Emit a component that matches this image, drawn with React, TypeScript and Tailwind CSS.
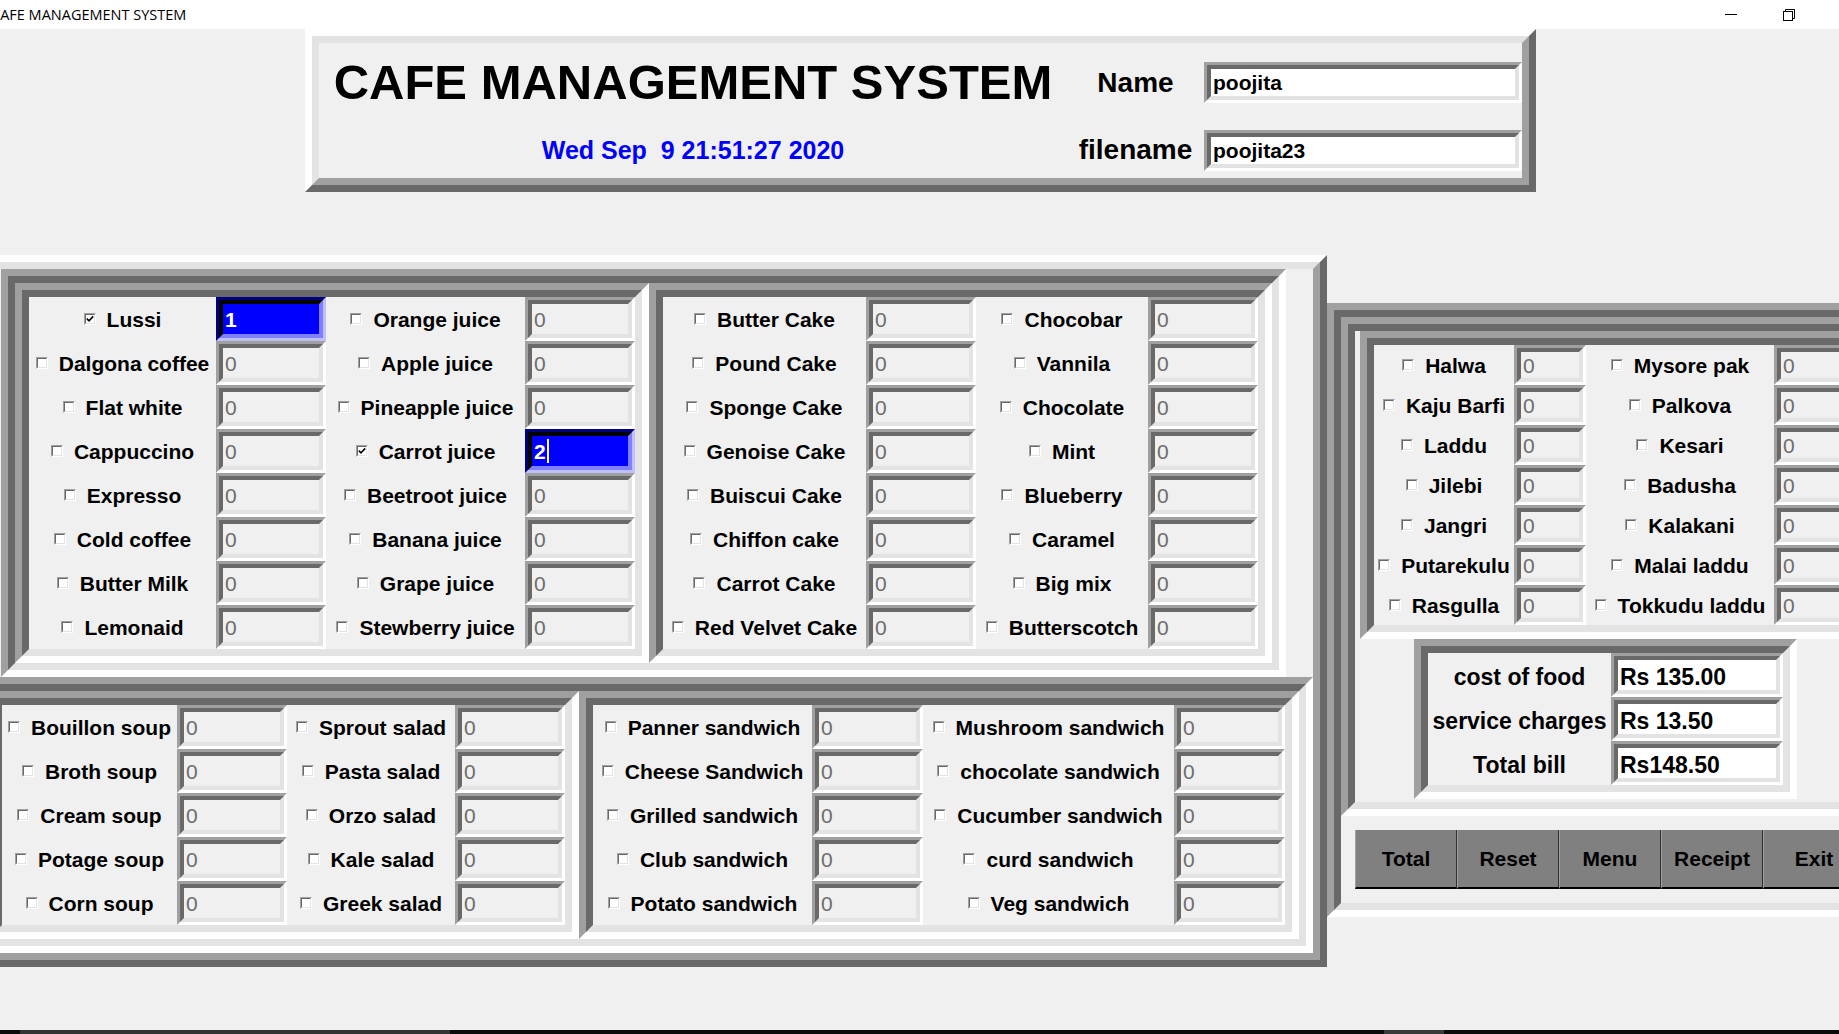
import React from 'react';

type Item = { name: string; value: string; on: boolean };

const it = (name: string, value = '0', on = false): Item => ({ name, value, on });

const drinks: [Item, Item][] = [
  [it('Lussi', '1', true), it('Orange juice')],
  [it('Dalgona coffee'), it('Apple juice')],
  [it('Flat white'), it('Pineapple juice')],
  [it('Cappuccino'), it('Carrot juice', '2', true)],
  [it('Expresso'), it('Beetroot juice')],
  [it('Cold coffee'), it('Banana juice')],
  [it('Butter Milk'), it('Grape juice')],
  [it('Lemonaid'), it('Stewberry juice')],
];

const cakes: [Item, Item][] = [
  [it('Butter Cake'), it('Chocobar')],
  [it('Pound Cake'), it('Vannila')],
  [it('Sponge Cake'), it('Chocolate')],
  [it('Genoise Cake'), it('Mint')],
  [it('Buiscui Cake'), it('Blueberry')],
  [it('Chiffon cake'), it('Caramel')],
  [it('Carrot Cake'), it('Big mix')],
  [it('Red Velvet Cake'), it('Butterscotch')],
];

const soups: [Item, Item][] = [
  [it('Bouillon soup'), it('Sprout salad')],
  [it('Broth soup'), it('Pasta salad')],
  [it('Cream soup'), it('Orzo salad')],
  [it('Potage soup'), it('Kale salad')],
  [it('Corn soup'), it('Greek salad')],
];

const sandwiches: [Item, Item][] = [
  [it('Panner sandwich'), it('Mushroom sandwich')],
  [it('Cheese Sandwich'), it('chocolate sandwich')],
  [it('Grilled sandwich'), it('Cucumber sandwich')],
  [it('Club sandwich'), it('curd sandwich')],
  [it('Potato sandwich'), it('Veg sandwich')],
];

const sweets: [Item, Item][] = [
  [it('Halwa'), it('Mysore pak')],
  [it('Kaju Barfi'), it('Palkova')],
  [it('Laddu'), it('Kesari')],
  [it('Jilebi'), it('Badusha')],
  [it('Jangri'), it('Kalakani')],
  [it('Putarekulu'), it('Malai laddu')],
  [it('Rasgulla'), it('Tokkudu laddu')],
];

const bill = [
  ['cost of food', 'Rs 135.00'],
  ['service charges', 'Rs 13.50'],
  ['Total bill', 'Rs148.50'],
];

// tk style 3d borders, two 7px bands each
function Sunken({ children, className = '' }: { children: React.ReactNode; className?: string }) {
  return (
    <div className={`shrink-0 border-[7px] border-t-[#a0a0a0] border-l-[#a0a0a0] border-r-white border-b-white ${className}`}>
      <div className="border-[7px] border-t-[#696969] border-l-[#696969] border-r-[#e3e3e3] border-b-[#e3e3e3]">
        {children}
      </div>
    </div>
  );
}

function Raised({ children, className = '' }: { children: React.ReactNode; className?: string }) {
  return (
    <div className={`shrink-0 border-[7px] border-t-white border-l-white border-r-[#696969] border-b-[#696969] ${className}`}>
      <div className="border-[7px] border-t-[#e3e3e3] border-l-[#e3e3e3] border-r-[#a0a0a0] border-b-[#a0a0a0]">
        {children}
      </div>
    </div>
  );
}

function Entry({ value, w, active = false, white = false, big = false }: { value: string; w: string; active?: boolean; white?: boolean; big?: boolean }) {
  const outer = active
    ? 'border-t-[#00007f] border-l-[#00007f] border-r-[#bfbfff] border-b-[#bfbfff]'
    : 'border-t-[#a0a0a0] border-l-[#a0a0a0] border-r-white border-b-white';
  const inner = active
    ? 'border-t-black border-l-black border-r-[#8080ff] border-b-[#8080ff]'
    : 'border-t-[#696969] border-l-[#696969] border-r-[#e3e3e3] border-b-[#e3e3e3]';
  const fill = active
    ? 'bg-[#0000ff] text-white font-bold'
    : white
      ? 'bg-white text-black font-bold'
      : 'bg-[#f0f0f0] text-[#6d6d6d]';
  return (
    <div className={`${w} h-full shrink-0 border-[3px] ${outer}`}>
      <div className={`h-full border-[4px] ${inner} ${fill} flex items-center pl-[2px] ${big ? 'text-[23px] pt-[4px]' : 'text-[21px]'} leading-none`}>
        {value}
        {value === '2' && <span className="ml-[1px] w-[2px] h-[24px] bg-white" />}
      </div>
    </div>
  );
}

function Check({ on }: { on: boolean }) {
  return (
    <span className="block w-[12px] h-[12px] shrink-0 border border-t-[#a0a0a0] border-l-[#a0a0a0] border-r-white border-b-white">
      <span className="flex items-center justify-center w-full h-full border border-t-[#696969] border-l-[#696969] border-r-[#e3e3e3] border-b-[#e3e3e3] bg-white">
        {on && (
          <svg width="8" height="8" viewBox="0 0 8 8">
            <path d="M0.8 3.6 L3 5.8 L7.2 1.4" stroke="black" strokeWidth="1.6" fill="none" />
          </svg>
        )}
      </span>
    </span>
  );
}

function CheckCell({ item, w }: { item: Item; w: string }) {
  return (
    <div className={`${w} h-full shrink-0 flex items-center justify-center gap-[11px]`}>
      <Check on={item.on} />
      <span className="text-[21px] font-bold text-black whitespace-nowrap leading-none">{item.name}</span>
    </div>
  );
}

function ItemGrid({ rows, cols, rowH }: { rows: [Item, Item][]; cols: [string, string, string, string]; rowH: string }) {
  return (
    <div className="flex flex-col">
      {rows.map((r, i) => (
        <div key={i} className={`flex ${rowH}`}>
          <CheckCell item={r[0]} w={cols[0]} />
          <Entry value={r[0].value} active={r[0].on} w={cols[1]} />
          <CheckCell item={r[1]} w={cols[2]} />
          <Entry value={r[1].value} active={r[1].on} w={cols[3]} />
        </div>
      ))}
    </div>
  );
}

function TitleBar() {
  return (
    <div className="h-[29px] shrink-0 bg-white flex items-center overflow-hidden">
      <span className="-ml-[9px] text-[14.5px] text-black whitespace-nowrap font-['Open_Sans',sans-serif]">CAFE MANAGEMENT SYSTEM</span>
      <div className="ml-auto mr-[21px] flex h-full">
        <div className="w-[58px] h-full flex items-center justify-center">
          <span className="block w-[12px] h-px bg-black" />
        </div>
        <div className="w-[58px] h-full flex items-center justify-center">
          <svg width="12" height="12" viewBox="0 0 12 12" fill="none" stroke="black" strokeWidth="1">
            <rect x="0.5" y="2.5" width="9" height="9" />
            <path d="M2.5 2.5 V0.5 H11.5 V9.5 H9.5" />
          </svg>
        </div>
      </div>
    </div>
  );
}

export default function App() {
  return (
    <div className="w-[1839px] h-[1034px] overflow-hidden bg-[#f0f0f0] flex flex-col font-['Liberation_Sans',Arial,sans-serif] text-black">
      <TitleBar />

      {/* header */}
      <Raised className="ml-[305px] w-[1231px]">
        <div className="flex">
          <div className="w-[748px] flex flex-col">
            <div className="h-[79px] flex items-center justify-center text-[49px] font-bold leading-none whitespace-nowrap">
              CAFE MANAGEMENT SYSTEM
            </div>
            <div className="h-[56px] flex items-center justify-center text-[25px] font-bold text-[#0000ff] leading-none whitespace-pre">
              {'Wed Sep  9 21:51:27 2020'}
            </div>
          </div>
          <div className="w-[137px] flex flex-col text-[28px] font-bold leading-none">
            <div className="h-[79px] flex items-center justify-center">Name</div>
            <div className="h-[56px] flex items-center justify-center">filename</div>
          </div>
          <div className="w-[318px] flex flex-col">
            <div className="h-[79px] flex items-center">
              <div className="h-[41px] w-full flex">
                <Entry value="poojita" white w="w-full" />
              </div>
            </div>
            <div className="h-[56px] flex items-center">
              <div className="h-[41px] w-full flex">
                <Entry value="poojita23" white w="w-full" />
              </div>
            </div>
          </div>
        </div>
      </Raised>

      <div className="-ml-[40px] mt-[63px] flex items-start">
        {/* menu */}
        <Raised>
          <div className="flex flex-col items-center">
            <Sunken>
              <div className="flex">
                <Sunken>
                  <ItemGrid rows={drinks} cols={['w-[187px]', 'w-[110px]', 'w-[199px]', 'w-[110px]']} rowH="h-[44px]" />
                </Sunken>
                <Sunken>
                  <ItemGrid rows={cakes} cols={['w-[203px]', 'w-[110px]', 'w-[172px]', 'w-[110px]']} rowH="h-[44px]" />
                </Sunken>
              </div>
            </Sunken>
            <Sunken>
              <div className="flex">
                <Sunken>
                  <ItemGrid rows={soups} cols={['w-[175px]', 'w-[110px]', 'w-[168px]', 'w-[110px]']} rowH="h-[44px]" />
                </Sunken>
                <Sunken>
                  <ItemGrid rows={sandwiches} cols={['w-[219px]', 'w-[111px]', 'w-[251px]', 'w-[111px]']} rowH="h-[44px]" />
                </Sunken>
              </div>
            </Sunken>
          </div>
        </Raised>

        {/* sweets, bill, buttons */}
        <Sunken className="mt-[48px]">
          <Sunken>
            <div className="flex flex-col items-center">
              <Sunken>
                <ItemGrid rows={sweets} cols={['w-[140px]', 'w-[72px]', 'w-[188px]', 'w-[72px]']} rowH="h-[40px]" />
              </Sunken>
              <Sunken className="mb-[3px] mr-[9px]">
                <div className="flex flex-col">
                  {bill.map(([label, value]) => (
                    <div key={label} className="flex h-[44px]">
                      <div className="w-[183px] pt-[4px] flex items-center justify-center text-[23px] font-bold whitespace-nowrap leading-none">
                        {label}
                      </div>
                      <Entry value={value} white big w="w-[172px]" />
                    </div>
                  ))}
                </div>
              </Sunken>
            </div>
          </Sunken>
          <div className="p-[14px] flex">
            {['Total', 'Reset', 'Menu', 'Receipt', 'Exit'].map((b) => (
              <div
                key={b}
                className="w-[102px] h-[59px] shrink-0 bg-[#808080] border-r border-r-[#303030] border-l border-l-[#a0a0a0] border-b-2 border-b-black flex items-center justify-center text-[21px] font-bold"
              >
                {b}
              </div>
            ))}
          </div>
        </Sunken>
      </div>

      <div className="mt-auto h-[4px] shrink-0 bg-[#0b0b0b] flex">
        <div className="ml-[20px] w-[430px] h-full bg-[#333333]" />
        <div className="ml-[934px] w-[60px] h-full bg-[#3a3a3a]" />
      </div>
    </div>
  );
}
